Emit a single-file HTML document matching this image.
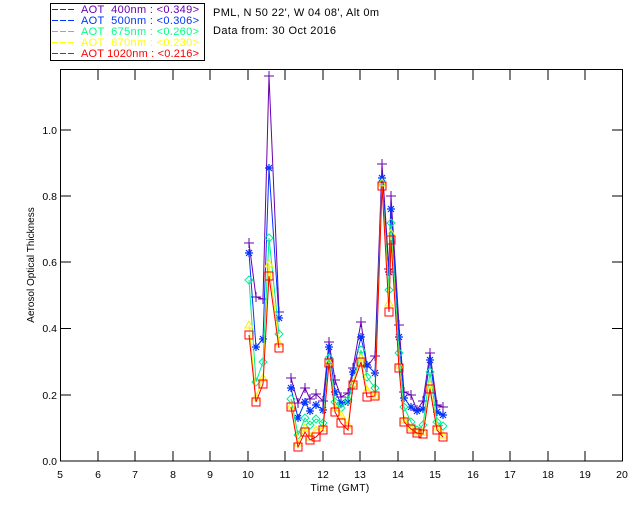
<!DOCTYPE html>
<html><head><meta charset="utf-8"><style>
html,body{margin:0;padding:0;background:#fff;}
svg{display:block;font-family:"Liberation Sans",sans-serif;}
</style></head><body>
<svg width="640" height="512" viewBox="0 0 640 512" xmlns="http://www.w3.org/2000/svg">
<defs>
<marker id="mp" markerWidth="10" markerHeight="10" refX="5" refY="5" markerUnits="userSpaceOnUse"><path d="M5 0V10M0 5H10" stroke="#6a00b0" stroke-width="1" fill="none"/></marker>
<marker id="mb" markerWidth="10" markerHeight="10" refX="5" refY="5" markerUnits="userSpaceOnUse"><path d="M5 1V9M1 5H9M2 2L8 8M8 2L2 8" stroke="#0033ff" stroke-width="1.2" fill="none"/></marker>
<marker id="mg" markerWidth="10" markerHeight="10" refX="5" refY="5" markerUnits="userSpaceOnUse"><path d="M5 1L9 5L5 9L1 5Z" stroke="#00ee99" stroke-width="1" fill="none"/></marker>
<marker id="my" markerWidth="10" markerHeight="10" refX="5" refY="5" markerUnits="userSpaceOnUse"><path d="M5 1L9 8H1Z" stroke="#ffee00" stroke-width="1" fill="none"/></marker>
<marker id="mr" markerWidth="10" markerHeight="10" refX="5" refY="5" markerUnits="userSpaceOnUse"><rect x="1" y="1" width="8" height="8" stroke="#ff0000" stroke-width="1" fill="none"/></marker>
</defs>

<!-- legend -->
<rect x="50.5" y="3.5" width="154" height="57" fill="none" stroke="#000"/>
<g font-size="11">
<line x1="52" y1="9.5" x2="74" y2="9.5" stroke="#6a00b0" stroke-dasharray="6,2"/>
<text x="81" y="13" fill="#6a00b0" xml:space="preserve" textLength="118" lengthAdjust="spacing">AOT  400nm : &lt;0.349&gt;</text>
<line x1="52" y1="20.5" x2="74" y2="20.5" stroke="#0033ff" stroke-dasharray="6,2"/>
<text x="81" y="24" fill="#0033ff" xml:space="preserve" textLength="118" lengthAdjust="spacing">AOT  500nm : &lt;0.306&gt;</text>
<line x1="52" y1="31.5" x2="74" y2="31.5" stroke="#00ff88" stroke-dasharray="6,2"/>
<text x="81" y="35" fill="#00ff88" xml:space="preserve" textLength="118" lengthAdjust="spacing">AOT  675nm : &lt;0.260&gt;</text>
<line x1="52" y1="42.5" x2="74" y2="42.5" stroke="#ffff00" stroke-dasharray="6,2"/>
<text x="81" y="46" fill="#ffff00" xml:space="preserve" textLength="118" lengthAdjust="spacing">AOT  870nm : &lt;0.230&gt;</text>
<line x1="52" y1="53.5" x2="74" y2="53.5" stroke="#ff0000" stroke-dasharray="6,2"/>
<text x="81" y="57" fill="#ff0000" xml:space="preserve" textLength="118" lengthAdjust="spacing">AOT 1020nm : &lt;0.216&gt;</text>
</g>
<text x="213" y="16" font-size="11" textLength="166" lengthAdjust="spacing">PML, N 50 22', W 04 08', Alt 0m</text>
<text x="213" y="34" font-size="11" textLength="123" lengthAdjust="spacing">Data from: 30 Oct 2016</text>

<!-- axes -->
<rect x="60.5" y="69.5" width="562" height="391.5" fill="none" stroke="#000"/>
<g stroke="#000">
<path d="M98 461v-10M135 461v-10M173 461v-10M210 461v-10M248 461v-10M285 461v-10M323 461v-10M360 461v-10M398 461v-10M435 461v-10M473 461v-10M510 461v-10M548 461v-10M585 461v-10"/>
<path d="M98 70v10M135 70v10M173 70v10M210 70v10M248 70v10M285 70v10M323 70v10M360 70v10M398 70v10M435 70v10M473 70v10M510 70v10M548 70v10M585 70v10"/>
<path d="M60 395h11M60 328.5h11M60 262h11M60 196h11M60 130h11"/>
<path d="M623 395h-11M623 328.5h-11M623 262h-11M623 196h-11M623 130h-11"/>
</g>
<g font-size="10.5" text-anchor="middle">
<text x="60" y="478">5</text><text x="98" y="478">6</text><text x="135" y="478">7</text><text x="173" y="478">8</text><text x="210" y="478">9</text><text x="248" y="478">10</text><text x="285" y="478">11</text><text x="323" y="478">12</text><text x="360" y="478">13</text><text x="398" y="478">14</text><text x="435" y="478">15</text><text x="473" y="478">16</text><text x="510" y="478">17</text><text x="548" y="478">18</text><text x="585" y="478">19</text><text x="622" y="478">20</text>
<text x="340" y="491" letter-spacing="0.3">Time (GMT)</text>
</g>
<g font-size="10.5" text-anchor="end">
<text x="57" y="465">0.0</text><text x="57" y="399">0.2</text><text x="57" y="332">0.4</text><text x="57" y="266">0.6</text><text x="57" y="200">0.8</text><text x="57" y="134">1.0</text>
</g>
<text transform="translate(34,265) rotate(-90)" font-size="10" text-anchor="middle">Aerosol Optical Thickness</text>

<!-- data -->
<g fill="none" stroke-width="1">
<polyline stroke="#6a00b0" marker-start="url(#mp)" marker-mid="url(#mp)" marker-end="url(#mp)" points="249,243 256,297 263,299 269,76 279,312"/>
<polyline stroke="#6a00b0" marker-start="url(#mp)" marker-mid="url(#mp)" marker-end="url(#mp)" points="291,378 298,403 305,388 310,399 316,394 323,401 329,342 335,380 341,397 348,393 353,368 361,322 367,367 375,356 382,164 389,269 391,196 399,325 404,392 411,395 417,410 423,401 430,353 437,405 443,407"/>
<polyline stroke="#0033ff" marker-start="url(#mb)" marker-mid="url(#mb)" marker-end="url(#mb)" points="249,253 256,347 263,339 269,168 279,318"/>
<polyline stroke="#0033ff" marker-start="url(#mb)" marker-mid="url(#mb)" marker-end="url(#mb)" points="291,388 298,418 305,402 310,411 316,405 323,410 329,347 335,392 341,403 348,402 353,372 361,337 367,365 375,373 382,178 389,272 391,209 399,337 404,398 411,407 417,411 423,409 430,360 437,412 443,415"/>
<polyline stroke="#00ee88" marker-start="url(#mg)" marker-mid="url(#mg)" marker-end="url(#mg)" points="249,280 256,382 263,362 269,238 279,334"/>
<polyline stroke="#00ee88" marker-start="url(#mg)" marker-mid="url(#mg)" marker-end="url(#mg)" points="291,399 298,435 305,418 310,425 316,419 323,423 329,358 335,402 341,408 348,400 353,385 361,350 367,377 375,388 382,183 389,290 391,223 399,353 404,407 411,422 417,430 423,425 430,372 437,422 443,426"/>
<polyline stroke="#ffee00" marker-start="url(#my)" marker-mid="url(#my)" marker-end="url(#my)" points="249,325 256,397 263,378 269,264 279,343"/>
<polyline stroke="#ffee00" marker-start="url(#my)" marker-mid="url(#my)" marker-end="url(#my)" points="291,406 298,443 305,428 310,437 316,430 323,428 329,362 335,408 341,415 348,425 353,383 361,358 367,390 375,395 382,183 389,303 391,233 399,365 404,420 411,428 417,432 423,432 430,385 437,427 443,435"/>
<polyline stroke="#ff0000" marker-start="url(#mr)" marker-mid="url(#mr)" marker-end="url(#mr)" points="249,335 256,402 263,384 269,276 279,348"/>
<polyline stroke="#ff0000" marker-start="url(#mr)" marker-mid="url(#mr)" marker-end="url(#mr)" points="291,407 298,447 305,432 310,440 316,437 323,430 329,363 335,412 341,423 348,430 353,385 361,362 367,397 375,396 382,186 389,312 391,240 399,368 404,422 411,429 417,433 423,434 430,389 437,430 443,437"/>
</g>
</svg>
</body></html>
